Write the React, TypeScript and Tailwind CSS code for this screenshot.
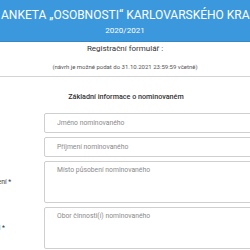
const fields = [
  { label: 'Jméno *', placeholder: 'Jméno nominovaného', area: false },
  { label: 'Příjmení *', placeholder: 'Příjmení nominovaného', area: false },
  { label: 'Místo působení *', placeholder: 'Místo působení nominovaného', area: true },
  { label: 'Obor činnosti *', placeholder: 'Obor činnosti(í) nominovaného', area: true },
];

const App = () => {
  return (
    <div className="w-[250px] h-[250px] overflow-hidden bg-white font-['Roboto',sans-serif] text-[#333]">
      {/* header */}
      <div className="h-[42px] bg-[#3c98dc] border-b border-[#3488c6] flex flex-col items-center pt-[8px] text-white">
        <div className="w-full flex justify-start pl-[1px]">
          <h1 className="whitespace-nowrap text-[12px] leading-[15px]">
            ANKETA „OSOBNOSTI“ KARLOVARSKÉHO KRAJE
          </h1>
        </div>
        <p className="text-[8px] leading-[10px] mt-[3px]">2020/2021</p>
      </div>

      <div className="flex flex-col items-center mt-[1px]">
        <p className="text-[8px] leading-[12px]">Registrační formulář :</p>
        <p className="text-[6px] leading-[8px] mt-[8px] text-[#555]">
          (návrh je možné podat do 31.10.2021 23:59:59 včetně)
        </p>
      </div>
      <div className="border-t border-[#d4d4d4] mt-[5px]" />

      <p className="text-center text-[7.2px] leading-[10px] font-medium mt-[15px] ml-[2px]">
        Základní informace o nominovaném
      </p>

      <div className="flex flex-col gap-[4px] mt-[11px] ml-[-40px]">
        {fields.map((f) => (
          <div key={f.label} className="flex items-center">
            <label className="w-[84px] shrink-0 text-[6.8px] whitespace-nowrap">{f.label}</label>
            {f.area ? (
              <textarea
                placeholder={f.placeholder}
                className="w-[240px] h-[42px] shrink-0 border border-[#cfcfcf] rounded-[2px] px-[12px] py-[4px] text-[6.8px] leading-[9px] resize-none placeholder:text-[#8a8a8a] outline-none"
              />
            ) : (
              <input
                placeholder={f.placeholder}
                className="w-[240px] h-[20px] shrink-0 border border-[#cfcfcf] rounded-[2px] px-[12px] text-[6.8px] placeholder:text-[#8a8a8a] outline-none"
              />
            )}
          </div>
        ))}
      </div>
    </div>
  );
};

export default App;
